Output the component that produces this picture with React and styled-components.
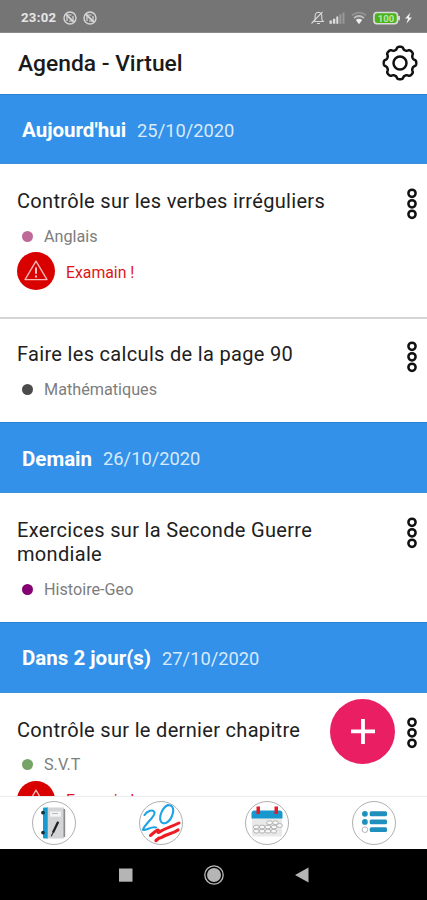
import styled, { createGlobalStyle } from "styled-components";

const days = [
  {
    label: "Aujourd'hui",
    date: "25/10/2020",
    height: 70,
    tasks: [
      {
        title: "Contrôle sur les verbes irréguliers",
        subject: "Anglais",
        color: "#bd6a98",
        exam: true,
        height: 155,
      },
      {
        title: "Faire les calculs de la page 90",
        subject: "Mathématiques",
        color: "#4b4b4b",
        height: 103,
      },
    ],
  },
  {
    label: "Demain",
    date: "26/10/2020",
    height: 71,
    tasks: [
      {
        title: "Exercices sur la Seconde Guerre mondiale",
        subject: "Histoire-Geo",
        color: "#850070",
        height: 128.5,
      },
    ],
  },
  {
    label: "Dans 2 jour(s)",
    date: "27/10/2020",
    height: 71,
    tasks: [
      {
        title: "Contrôle sur le dernier chapitre",
        subject: "S.V.T",
        color: "#76a467",
        exam: true,
        height: 155,
      },
    ],
  },
];

export default function App() {
  return (
    <>
      <GlobalStyle />
      <Screen>
        <StatusBar />
        <Header>
          <Title>Agenda - Virtuel</Title>
          <IconButton aria-label="Paramètres">
            <GearIcon />
          </IconButton>
        </Header>
        <Agenda>
          {days.map((day) => (
            <section key={day.date}>
              <DayHeader $height={day.height}>
                <DayLabel>{day.label}</DayLabel>
                <DayDate>{day.date}</DayDate>
              </DayHeader>
              {day.tasks.map((task) => (
                <Task key={task.title} {...task} />
              ))}
            </section>
          ))}
          <AddButton aria-label="Ajouter">
            <svg width="26" height="26" viewBox="0 0 26 26">
              <path d="M13 1v25M1 13.3h24" stroke="#fff" strokeWidth="3.8" />
            </svg>
          </AddButton>
        </Agenda>
        <TabBar>
          <Tab>
            <NotebookIcon />
          </Tab>
          <Tab>
            <GradesIcon />
          </Tab>
          <Tab>
            <CalendarIcon />
          </Tab>
          <Tab>
            <ListIcon />
          </Tab>
        </TabBar>
        <SystemBar>
          <svg width="16" height="24" viewBox="0 0 16 24">
            <rect x="1" y="5.5" width="13.5" height="13.2" fill="#b5b5b5" />
          </svg>
          <svg width="22" height="24" viewBox="0 0 22 24">
            <circle cx="11" cy="12" r="9.2" fill="none" stroke="#bcbcbc" strokeWidth="1.3" />
            <circle cx="11" cy="12" r="7" fill="#b5b5b5" />
          </svg>
          <svg width="16" height="24" viewBox="0 0 16 24">
            <path d="M14.5 4.5v15L1 12z" fill="#b5b5b5" />
          </svg>
        </SystemBar>
      </Screen>
    </>
  );
}

function Task({ title, subject, color, exam, height }) {
  return (
    <StyledTask $height={height}>
      <TaskBody>
        <TaskTitle>{title}</TaskTitle>
        <Subject>
          <Dot $color={color} />
          {subject}
        </Subject>
        {exam && (
          <Exam>
            <ExamBadge>
              <svg width="26" height="24" viewBox="0 0 26 24">
                <path
                  d="M13 2.2 24 20.6H2z"
                  fill="none"
                  stroke="#f6b4b4"
                  strokeWidth="1.4"
                  strokeLinejoin="round"
                />
                <path d="M13 8.5v6.2M13 16.6v1.9" stroke="#ffdada" strokeWidth="1.8" />
              </svg>
            </ExamBadge>
            <ExamText>Examain !</ExamText>
          </Exam>
        )}
      </TaskBody>
      <MenuButton aria-label="Options">
        <svg width="12" height="34" viewBox="0 0 12 34" fill="none" stroke="#111" strokeWidth="2.5">
          <circle cx="6" cy="6.3" r="3.6" />
          <circle cx="6" cy="16.8" r="3.6" />
          <circle cx="6" cy="27.3" r="3.6" />
        </svg>
      </MenuButton>
    </StyledTask>
  );
}

function StatusBar() {
  return (
    <StyledStatusBar>
      <Clock>23:02</Clock>
      <StatusIcons>
        <BlockedIcon />
        <BlockedIcon />
      </StatusIcons>
      <Spacer />
      <svg width="103" height="18" viewBox="0 0 103 18" fill="none">
        <g stroke="#d8d8d8" strokeWidth="1.1">
          <path d="M3.5 12.5h9.8l-1.5-2V7.2c0-2.2-1.2-3.6-3.4-3.9-2 .3-3.3 1.8-3.3 3.9v3.3z" />
          <path d="M1.5 14.5 12.5 2.8M7 14.5h3" />
        </g>
        <g fill="#dedede">
          <path d="M19.5 11.5h2.4v3.2h-2.4zM22.9 9.8h2.4v4.9h-2.4zM26.3 7.4h2v7.3h-2z" />
          <path d="M29.4 5.2h2v9.5h-2zM32.5 3.4h2v11.3h-2z" opacity=".35" />
        </g>
        <g stroke="#d0d0d0" strokeWidth="1.7">
          <path d="M42 6.200q7-5.200 14 0" opacity=".35" />
          <path d="M44 9q5-4 10 0" opacity=".8" />
        </g>
        <path d="M45.800 11q3.200-2.600 6.400 0L49 15.200z" fill="#eee" />
        <rect x="63.900" y="3.500" width="23.600" height="11.200" rx="3.200" fill="#4cb31c" stroke="#dcdcdc" strokeWidth="1.600" />
        <path d="M89 7v4.200" stroke="#ddd" strokeWidth="1.800" />
        <text x="76" y="12.600" textAnchor="middle" fontSize="9.500" fontWeight="700" fill="#bfe6a8">
          100
        </text>
        <path d="M100.500 3.500 95 9.600h3.100l-1.600 5 5.500-6.100h-3.200z" fill="#f2f2f2" />
      </svg>
    </StyledStatusBar>
  );
}

function BlockedIcon() {
  return (
    <svg width="14" height="14" viewBox="0 0 14 14" fill="none" stroke="#d6d6d6">
      <circle cx="7" cy="7" r="6" strokeWidth="1.4" />
      <path d="M4 10V4h4.500M10 5v5H6" strokeWidth="1.200" />
      <path d="m3 3.300 7.600 7.600" strokeWidth="1.900" />
    </svg>
  );
}

// eight-lobed outline, a bit flatter than a plain cosine
const gearPath =
  Array.from({ length: 160 }, (_, i) => {
    const angle = (i / 160) * Math.PI * 2;
    const radius = 14.9 + 1.4 * Math.tanh(1.8 * (Math.cos(8 * angle) + 0.15));
    const x = 18 + radius * Math.cos(angle);
    const y = 18 + radius * Math.sin(angle);
    return `${i ? "L" : "M"}${x.toFixed(2)} ${y.toFixed(2)}`;
  }).join("") + "z";

function GearIcon() {
  return (
    <svg width="36" height="36" viewBox="0 0 36 36" fill="none" stroke="#111" strokeWidth="2.5">
      <path d={gearPath} strokeLinejoin="round" />
      <circle cx="18" cy="18" r="6.5" />
    </svg>
  );
}

function NotebookIcon() {
  return (
    <svg width="40" height="40" viewBox="0 0 40 40">
      <rect x="9" y="4.5" width="5" height="31" rx="1" fill="#179bd0" />
      <rect x="13" y="4.5" width="17" height="31" fill="#d2d4d6" />
      <path d="M29.5 6h1.700v28h-1.700z" fill="#8c8c8c" />
      <path d="M13.500 4.500v31" stroke="#6f7c84" strokeWidth=".7" />
      <rect x="16" y="8.500" width="11" height="5.200" fill="#f3f3f3" />
      <path d="M18 10.500h6" stroke="#a9a9a9" strokeWidth=".8" />
      <path d="m24.200 18.800-5.300 11" stroke="#202020" strokeWidth="2.300" />
      <path d="m18.800 30-1.500 3.200" stroke="#333" strokeWidth="1.200" />
      <circle cx="9" cy="9.700" r="1.900" fill="#1c3037" />
      <circle cx="9" cy="29.600" r="1.900" fill="#1c3037" />
    </svg>
  );
}

function GradesIcon() {
  return (
    <svg width="44" height="44" viewBox="0 0 44 44" fill="none" strokeLinecap="round" strokeLinejoin="round">
      <g stroke="#1ea3e4" strokeWidth="2.1">
        <path d="M5.500 14C8 10 14.500 7.500 15.500 11.500 16.500 16 5 23 4 29c4 .5 8-4 13-2.500" />
        <path d="M29 4c-5 2-9 10.500-7.500 15.500 1.500 5 8.500 3 11.500-4.500C36 7 33 2.500 27 5" />
      </g>
      <g stroke="#ed1c22">
        <path d="m11.500 34.500c3-2.500 6-5.500 7.500-5.500s-1.500 2.500.5 2.500c5-3.500 12-5.500 20.500-9.500" strokeWidth="3" />
        <path d="m17 39.500c2-2 4-3 5.500-3 5-3.500 11-3.500 16.500-7.500" strokeWidth="3.200" />
      </g>
    </svg>
  );
}

function CalendarIcon() {
  const cells = [
    [18.5, 16.7],
    [24.5, 16.7],
    [5.3, 21],
    [11.1, 21],
    [16.9, 21],
    [23, 21],
    [28.600, 19.500],
    [5.3, 25.2],
    [11.1, 25.2],
    [16.9, 25.2],
    [22.700, 25.2],
  ];
  return (
    <svg width="32" height="34" viewBox="0 0 32 34">
      <path d="M1 11h30v18q0 1.500-1.500 1.500h-27Q1 30.500 1 29z" fill="#e9e9e9" />
      <path d="M.5 12.500V7.500q0-3 3-3h25q3 0 3 3v5z" fill="#1797cd" />
      <path d="M5.500.5H9v7.500H5.500zM23.500.5H27v7.500h-3.500z" fill="#e31d27" />
      {cells.map(([x, y]) => (
        <ellipse key={`${x}-${y}`} cx={x} cy={y} rx="2.9" ry="1.900" fill="#f8f8f8" stroke="#9a9a9a" strokeWidth=".7" />
      ))}
    </svg>
  );
}

function ListIcon() {
  return (
    <svg width="28" height="28" viewBox="0 0 28 28">
      <g fill="#1f8fbe">
        <rect x="9.700" y="2.300" width="17.300" height="4.900" rx="1.500" />
        <rect x="9.700" y="10.400" width="17.300" height="4.900" rx="1.500" />
        <rect x="9.700" y="18.200" width="17.300" height="4.900" rx="1.500" />
        <circle cx="4.900" cy="4.800" r="2.900" />
        <circle cx="4.900" cy="12.900" r="2.900" />
      </g>
      <circle cx="4.900" cy="20.700" r="2.800" fill="#fff" stroke="#8d989c" strokeWidth=".7" />
    </svg>
  );
}

const GlobalStyle = createGlobalStyle`
  * {
    box-sizing: border-box;
  }

  body {
    margin: 0;
    font-family: Roboto, "Liberation Sans", sans-serif;
    background: #fff;
  }

  h1, h2, h3, p {
    margin: 0;
    font-weight: 400;
  }

  button {
    padding: 0;
    border: 0;
    background: none;
  }

  svg {
    display: block;
    flex-shrink: 0;
  }
`;

const Screen = styled.div`
  display: flex;
  flex-direction: column;
  width: 427px;
  height: 900px;
  overflow: hidden;
  background: #fff;
`;

const StyledStatusBar = styled.div`
  display: flex;
  align-items: center;
  flex-shrink: 0;
  height: 33px;
  padding: 3px 14px 0 21px;
  border-bottom: 1px solid #8a8a8a;
  background: #757575;
`;

const Clock = styled.span`
  width: 42px;
  color: #e6e6e6;
  font-size: 13.2px;
  font-weight: 700;
  letter-spacing: 0.3px;
`;

const StatusIcons = styled.div`
  display: flex;
  gap: 6px;
`;

const Spacer = styled.div`
  flex: 1;
`;

const Header = styled.header`
  display: flex;
  justify-content: space-between;
  align-items: center;
  flex-shrink: 0;
  height: 61px;
  padding: 0 9px 1px 18px;
`;

const Title = styled.h1`
  color: #1a1a1a;
  font-size: 22.8px;
  font-weight: 500;
  line-height: 28px;
  padding-top: 2px;
`;

const IconButton = styled.button`
  display: flex;
`;

const Agenda = styled.main`
  position: relative;
  flex: 1;
  min-height: 0;
  overflow: hidden;
`;

const DayHeader = styled.header`
  display: flex;
  align-items: center;
  gap: 11px;
  height: ${({ $height }) => $height}px;
  padding: 2px 22px 0;
  border-top: 1px solid #2d80cb;
  border-bottom: 1px solid #3f8fd8;
  background: #3391e9;
  color: #fff;
`;

const DayLabel = styled.h2`
  font-size: 20.5px;
  font-weight: 700;
`;

const DayDate = styled.span`
  color: #d8eafb;
  font-size: 18.3px;
`;

const StyledTask = styled.article`
  display: flex;
  justify-content: space-between;
  height: ${({ $height }) => $height}px;
  padding: 25px 9.5px 0 17px;

  & + & {
    padding-top: 23px;
  }

  &:not(:last-child) {
    border-bottom: 2px solid #d5d5d5;
  }
`;

const TaskBody = styled.div`
  width: 325px;
`;

const TaskTitle = styled.h3`
  color: #202020;
  font-size: 20px;
  line-height: 24px;
  letter-spacing: 0.32px;
`;

const Subject = styled.p`
  display: flex;
  align-items: center;
  height: 22px;
  margin-top: 12px;
  padding-left: 5px;
  color: #7d7d7d;
  font-size: 16.2px;
`;

const Dot = styled.span`
  width: 11px;
  height: 11px;
  margin-right: 11px;
  border-radius: 50%;
  background: ${({ $color }) => $color};
`;

const Exam = styled.div`
  display: flex;
  align-items: center;
  gap: 11px;
  margin-top: 5px;
`;

const ExamText = styled.span`
  padding-top: 2px;
  color: #dc1717;
  font-size: 15.8px;
`;

const ExamBadge = styled.span`
  display: flex;
  justify-content: center;
  align-items: center;
  width: 38px;
  height: 38px;
  border-radius: 50%;
  background: #d90000;
`;

const MenuButton = styled.button`
  display: flex;
  align-self: flex-start;
  margin-top: -2px;
`;

const AddButton = styled.button`
  position: absolute;
  right: 32px;
  bottom: 32.5px;
  display: flex;
  justify-content: center;
  align-items: center;
  width: 65px;
  height: 65px;
  border-radius: 50%;
  background: #e91e63;
`;

const TabBar = styled.nav`
  display: grid;
  grid-template-columns: repeat(4, 1fr);
  place-items: center;
  flex-shrink: 0;
  height: 53px;
  padding: 0 0 1px 1px;
  border-top: 1px solid #ececec;
  background: #fff;
`;

const Tab = styled.button`
  display: flex;
  justify-content: center;
  align-items: center;
  width: 44px;
  height: 44px;
  border: 1px solid #b0b0b0;
  border-radius: 50%;
`;

const SystemBar = styled.footer`
  display: flex;
  justify-content: space-between;
  flex-shrink: 0;
  height: 51px;
  padding: 14px 117px 0 118px;
  background: #000;
`;
